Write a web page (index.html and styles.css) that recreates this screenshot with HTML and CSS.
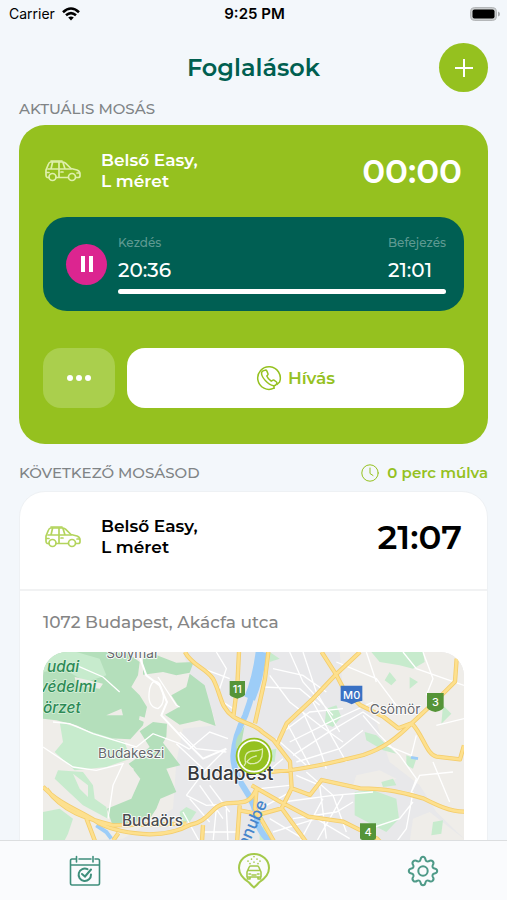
FILE: index.html
```html
<!DOCTYPE html>
<html lang="hu">
  <head>
    <meta charset="UTF-8" />
    <meta name="viewport" content="width=device-width, initial-scale=1" />
    <title>Foglalások</title>
    <link rel="stylesheet" href="styles.css" />
  </head>
  <body>
    <svg class="defs" width="0" height="0" aria-hidden="true">
      <symbol id="car" viewBox="0 0 36 22">
        <g fill="none" stroke="currentColor" stroke-width="1.7" stroke-linejoin="round" stroke-linecap="round">
          <path d="M4 17.500H2.200Q1 17 1 15V10L3.500 4Q4.200 2 6 2H17Q19 2 20.500 3.200L26 8.500L32 10Q35 11 35 14V16Q35 17.500 33 17.500H31M11 17.500H23" />
          <path d="M3 9H26M7.500 2.500L6 9M14 2.500V17M18 2.500L20 9M1.500 12.500H4M32 13H34.500M16 12H18M6 1H17" />
          <circle cx="7.500" cy="17" r="3.500" />
          <circle cx="27" cy="17" r="3.500" />
        </g>
      </symbol>
    </svg>

    <div class="status-bar">
      <div class="carrier">
        Carrier
        <svg width="18" height="14" viewBox="0 0 18 14" aria-hidden="true">
          <g fill="none" stroke="#000" stroke-width="2.600">
            <path d="M1 5.200Q9 -2.200 17 5.200" />
            <path d="M4 8.300Q9 4 14 8.300" />
          </g>
          <path d="M6.200 10.600Q9 8.300 11.800 10.600L9 13.600Z" />
        </svg>
      </div>
      <div class="clock">9:25 PM</div>
      <div class="battery">
        <svg width="30" height="14" viewBox="0 0 30 14" aria-hidden="true">
          <rect x="0.500" y="0.500" width="26" height="13" rx="4" fill="#c9cccd" stroke="#b4b7b9" />
          <rect x="2.500" y="2.500" width="22" height="9" rx="2" />
          <path d="M28 4.500Q30 5 30 7T28 9.500Z" fill="#a9acae" />
        </svg>
      </div>
    </div>

    <main class="content">
      <header class="page-header">
        <h1>Foglalások</h1>
        <button class="add-button" type="button" aria-label="Új foglalás">
          <svg width="20" height="20" viewBox="0 0 20 20" aria-hidden="true">
            <path d="M10 1V19M1 10H19" stroke="#fff" stroke-width="2" />
          </svg>
        </button>
      </header>

      <div class="section-title">
        <h2>AKTUÁLIS MOSÁS</h2>
      </div>

      <section class="card current">
        <div class="card-header">
          <svg class="car" aria-hidden="true"><use href="#car" /></svg>
          <h3>Belső Easy,<br />L méret</h3>
          <div class="time">00:00</div>
        </div>

        <div class="progress-panel">
          <button class="pause" type="button" aria-label="Szünet">
            <span></span>
            <span></span>
          </button>
          <div class="progress-info">
            <div class="times">
              <div>
                <div class="label">Kezdés</div>
                <div class="value">20:36</div>
              </div>
              <div>
                <div class="label">Befejezés</div>
                <div class="value">21:01</div>
              </div>
            </div>
            <progress value="100" max="100" aria-label="Mosás állapota"></progress>
          </div>
        </div>

        <div class="actions">
          <button class="more" type="button" aria-label="Több">
            <span></span>
            <span></span>
            <span></span>
          </button>
          <button class="call" type="button">
            <svg width="26" height="26" viewBox="0 0 26 26" aria-hidden="true">
              <g fill="none" stroke="currentColor" stroke-width="1.500" stroke-linecap="round" stroke-linejoin="round">
                <path d="M18 23.200A11.300 11.300 0 1 1 23.600 17L21 19.500" />
                <path d="M7.300 5.700L9.500 5.100Q10.300 5 10.800 5.900L12 8.700Q12.300 9.500 11.500 10.200L10.800 11Q12 14 15.200 16.200L16.500 15.300Q17.300 14.800 18 15.200L20.500 17Q21.200 17.600 20.800 18.500Q19.700 21 17.500 20.700Q13.500 20 9.300 15.500Q5 10.800 5.600 7.500Q6 6 7.300 5.700Z" />
                <path d="M18 23.200V21" />
              </g>
            </svg>
            Hívás
          </button>
        </div>
      </section>

      <div class="section-title upcoming">
        <h2>KÖVETKEZŐ MOSÁSOD</h2>
        <div class="countdown">
          <svg width="18" height="18" viewBox="0 0 18 18" aria-hidden="true">
            <g fill="none" stroke="currentColor" stroke-linecap="round">
              <circle cx="9" cy="9" r="8.200" />
              <path d="M9 4V9.500L12 11.500" />
            </g>
          </svg>
          0 perc múlva
        </div>
      </div>

      <section class="card next">
        <div class="card-header">
          <svg class="car" aria-hidden="true"><use href="#car" /></svg>
          <h3>Belső Easy,<br />L méret</h3>
          <div class="time">21:07</div>
        </div>
        <div class="location">
          <p>1072 Budapest, Akácfa utca</p>
          <svg class="map" viewBox="0 0 1263 750" role="img" aria-label="Budapest térkép">
            <rect width="1263" height="750" fill="#e8e8ea" />

            <!-- countryside -->
            <g fill="#efede9">
              <path d="M0 0H420L450 90L500 150L520 220L420 230L400 330L390 470L240 560L0 570Z" />
              <path d="M890 0H1263V560L1180 480L1130 400L1040 330L1000 210L960 140L900 110Z" />
              <path d="M940 370L1010 355L1060 380L1010 410L930 400ZM1110 500L1160 480L1263 560V640H1090Z" />
            </g>

            <!-- forests -->
            <g fill="#b4dfbb">
              <path d="M0 0H250L290 30L285 70L265 105L290 130L312 165L300 220L262 262L180 258L100 220L40 205L0 200Z" />
              <path d="M300 18L330 5L400 32L452 30L440 62L400 70L360 60L300 68Z" />
              <path d="M385 130L430 105L440 65L485 100L505 170L518 222L470 205L410 218L366 188L408 165Z" />
              <path d="M290 238L330 210L372 215L370 255L360 272L412 340L370 350L400 420L352 440L340 470L320 500L210 525L192 470L265 440L292 380L257 335L286 315L320 285Z" />
            </g>
            <g fill="#c7ebcd">
              <path d="M0 60L60 50L130 90L190 70L170 20L100 0H0Z" />
              <path d="M50 210L130 235L245 270L262 320L190 345L95 355L35 300L60 270Z" />
              <path d="M45 355L120 360L150 400L155 440L190 465L195 500L120 460L35 380Z" />
              <path d="M0 480L50 470L90 500L75 545L60 575L0 570Z" />
              <path d="M410 480L430 465L460 480L440 510H415Z" />
              <path d="M680 0L710 20L680 30ZM850 170L880 160L895 195L870 225L845 215ZM680 295L700 290L695 330L675 325Z" />
              <path d="M965 240L1000 250L1060 305L1020 295L970 265Z" />
              <path d="M935 420L990 415L1060 440L1068 500L1030 540L935 490Z" />
              <path d="M985 0H1140L1145 30L1110 50L1070 40L1010 30ZM1040 60L1060 85L1045 100L1025 85ZM1100 75L1125 90L1100 110ZM1200 160L1225 185L1195 215ZM1090 310L1120 320L1110 350L1090 340ZM1170 510L1200 505L1195 545L1165 550Z" />
              <path d="M1015 390L1050 380L1060 400L1020 405ZM650 520L680 535V570H650Z" />
            </g>
            <g fill="#efede9">
              <path d="M190 190L235 170L240 190ZM95 75L180 95L170 110L100 100ZM290 192L315 200L310 213L288 203Z" />
              <path d="M165 375L245 330L272 350L260 430L205 462L170 430ZM90 365L135 400V435L110 410Z" />
              <path d="M335 85L395 72L405 90L365 140L330 120Z" />
            </g>

            <!-- Danube -->
            <g fill="none" stroke="#9dcdf8">
              <path d="M652 0Q640 100 607 190Q575 250 571 310Q570 360 605 410Q640 460 645 520Q665 560 685 570V750" stroke-width="18" />
              <path d="M655 0Q645 80 620 140" stroke-width="34" />
              <path d="M160 520L190 540L205 560" stroke-width="12" />
              <path d="M1104 316L1125 320" stroke-width="8" />
            </g>
            <path d="M594 240L605 220L596 270L578 292Q575 260 594 240Z" fill="#b4dfbb" />

            <!-- side streets -->
            <g fill="none" stroke="#fff" stroke-width="4">
              <path d="M292 20L310 70L350 100L372 150L355 190L420 260L480 320L550 290" stroke-width="6" />
              <path d="M320 110Q310 165 345 170Q375 150 350 95Q330 75 320 110" />
              <path d="M345 75L400 160L410 165M100 40L180 75L230 120M30 210L80 215L150 245L280 285L330 245L410 275L440 292" />
              <path d="M0 285L90 345L160 355L240 335L210 400L195 500" />
              <path d="M410 240L460 290L550 300M440 290L500 240L555 260M400 275L480 350M550 290L490 350L430 430" />
              <path d="M430 430L490 460L570 455M440 440L500 510M470 400L540 500M500 400L560 480M420 480L470 570M520 470L510 570M550 470L555 570M480 540H590" />
              <path d="M520 0L550 50L530 110M480 50L560 80M540 150L570 170" />
              <path d="M680 70L740 150L830 220L900 270M690 50L780 70L850 120M660 105L770 110L830 160M740 0L780 90L870 190M780 0L820 120L890 240" />
              <path d="M720 240L800 180L900 170M740 270L870 205L990 150M750 310L850 245L960 180L1010 215M760 330L890 290L960 235" />
              <path d="M780 180L830 290L850 350M810 150L870 260L910 330M730 210L800 340M700 260L790 340" />
              <path d="M960 190L1010 250L1070 310L1120 380L1105 420M1030 280L1105 310L1120 250M1100 430L1130 370L1230 360M1170 330L1220 450" />
              <path d="M760 370L830 400L850 560M790 360L870 430L910 540M720 450L870 430L990 420M750 500L880 480L930 450M840 440L770 570M900 430L820 570M950 540L1070 500L1110 450M1110 420L1090 530L1060 570" />
              <path d="M670 460L760 410M650 410L740 400M680 500L780 560M690 540L820 500L920 560M650 380L720 320" />
              <path d="M880 30L1000 80L1060 160M1140 0L1170 80L1150 130M1080 0L1120 50L1263 100M1180 220L1263 200M1000 90L970 0" />
            </g>

            <!-- main roads, casing and fill -->
            <g fill="none" stroke="#f4cd6c" stroke-width="13" stroke-linejoin="round">
              <path id="roads" d="M426 0C446 40 485 45 510 80C536 130 530 165 571 194C601 214 641 219 659 241L691 264L741 329L746 409L716 469L640 490
                M588 0L583 100L571 194M676 0L666 80L636 214
                M951 0L879 67L811 139L731 214L701 279M836 0L879 67L901 109L951 159L1021 194L1066 229L1106 214
                M1241 20L1236 89L1181 144L1106 214C1061 259 1021 289 961 309C881 329 781 354 680 360
                M1106 214C1141 249 1151 309 1181 314L1251 322L1263 280
                M746 409L801 429L836 384L951 409C1051 409 1101 429 1141 439C1181 459 1221 479 1263 479
                M626 400L711 449L796 494L901 509L1001 559L1060 620M641 409L636 469L691 565L740 750M716 469L786 565L850 640
                M0 404C50 459 120 479 170 515C220 540 270 545 320 547C390 545 420 530 440 519C500 509 505 459 550 454C590 449 620 462 641 409
                M10 410C60 480 130 500 210 520L430 515M130 499L155 565L150 640M226 544L211 565M480 519L475 600M590 460L580 600M590 475L640 485" />
            </g>
            <use href="#roads" fill="none" class="road-fill" />

            <!-- road signs -->
            <g class="sign">
              <path d="M560 87H606V127Q606 134 583 140Q560 134 560 127Z" fill="#559438" />
              <text x="583" y="123">11</text>
              <path d="M893 101H958V146Q940 148 926 157Q912 148 893 146Z" fill="#3971c4" />
              <text x="926" y="140">M0</text>
              <path d="M1152 123H1202V166Q1202 174 1177 180Q1152 174 1152 166Z" fill="#559438" />
              <text x="1177" y="161">3</text>
              <path d="M951 514H999V558Q999 564 975 570Q951 564 951 558Z" fill="#559438" />
              <text x="975" y="552">4</text>
            </g>

            <!-- places -->
            <g class="place">
              <text x="190" y="18">Solymár</text>
              <text x="165" y="317">Budakeszi</text>
              <text x="980" y="187">Csömör</text>
              <text x="237" y="523" class="town">Budaörs</text>
              <text x="433" y="384" class="city">Budapest</text>
            </g>
            <g class="park">
              <text x="12" y="59">udai</text>
              <text x="-12" y="121">védelmi</text>
              <text x="0" y="183">örzet</text>
            </g>
            <text class="river" transform="translate(598 622) rotate(-66)">Danube</text>

            <!-- car wash pin -->
            <circle cx="633" cy="312" r="55" fill="#95c11f" />
            <circle cx="633" cy="312" r="47" fill="none" stroke="#fff" stroke-width="5" />
            <path d="M608 333Q600 300 629 297Q646 297 658 291Q662 336 625 335Q617 336 612 329Q622 315 640 312M608 333L604 340" fill="none" stroke="#dcecb2" stroke-width="4" stroke-linecap="round" />
          </svg>
        </div>
      </section>
    </main>

    <nav class="tab-bar">
      <a href="#bookings" aria-label="Foglalások">
        <svg width="32" height="32" viewBox="0 0 32 32" aria-hidden="true">
          <g fill="none" stroke="#3f8f7c" stroke-width="1.600" stroke-linecap="round">
            <path d="M7 4H3Q1.500 4 1.500 6V28Q1.500 30 3 30H29Q30.500 30 30.500 28V6Q30.500 4 29 4H26M10 4H22M1.500 10H30.500M7.500 1.500V7M24 1.500V7" />
            <path d="M18.500 14.200A6.200 6.200 0 1 0 22 19.500" stroke-width="2" />
            <path d="M13 19L16 21.500L22 14.500" stroke-width="2" />
          </g>
        </svg>
      </a>
      <a href="#map" aria-label="Mosók">
        <svg width="32" height="36" viewBox="0 0 32 36" aria-hidden="true">
          <g fill="none" stroke="#a4c94b" stroke-width="1.600" stroke-linecap="round" stroke-linejoin="round">
            <path d="M16 34.500Q14 33 11 29.500Q1 23 1 15A15 14 0 0 1 31 15Q31 23 21 29.500Q18 33 16 34.500Z" stroke-width="2" />
            <path d="M9 19L11.200 14Q11.500 13 12.500 13H19.500Q20.500 13 20.800 14L23 19V24H9ZM10 17.500H22M11 21H12.500M19.500 21H21M14 22H18M9.500 24V26H12V24M20 24V26H22.500V24" />
            <path d="M10 8V8.200M13.500 6V6.200M16 9V9.200M19 6V6.200M22 8V8.200M16 3.500V3.700M12 10.500V10.700M20 10.500V10.700" />
          </g>
        </svg>
      </a>
      <a href="#settings" aria-label="Beállítások">
        <svg width="32" height="32" viewBox="0 0 32 32" aria-hidden="true">
          <g fill="none" stroke="#4e9a88" stroke-width="2" stroke-linejoin="round">
            <path d="M13.500 4.500Q14 1.800 16 1.800T18.500 4.500Q19 7 21.500 6.400Q24 4.500 25.700 6.300T25.600 10.500Q25 13 27.500 13.500Q30.200 14 30.200 16T27.500 18.500Q25 19 25.600 21.500Q27.500 24 25.700 25.700T21.500 25.600Q19 25 18.500 27.500Q18 30.200 16 30.200T13.500 27.500Q13 25 10.500 25.600Q8 27.500 6.300 25.700T6.400 21.500Q7 19 4.500 18.500Q1.800 18 1.800 16T4.500 13.500Q7 13 6.400 10.500Q4.500 8 6.300 6.300T10.500 6.400Q13 7 13.500 4.500Z" />
            <circle cx="16" cy="16" r="4.700" />
          </g>
        </svg>
      </a>
    </nav>
  </body>
</html>
```
FILE: styles.css
```css
* {
    box-sizing: border-box;
}

body {
    margin: 0;
    height: 100vh;
    display: flex;
    flex-direction: column;
    font-family: Montserrat, Inter, sans-serif;
    color: #000;
    background-color: #f3f7fb;
}

h1, h2, h3, p {
    margin: 0;
}

button {
    border: 0;
    padding: 0;
    font-family: inherit;
    display: flex;
    align-items: center;
    justify-content: center;
    cursor: pointer;
}

svg {
    display: block;
}

.defs {
    position: absolute;
}

/* Status bar */
.status-bar {
    display: grid;
    grid-template-columns: 1fr auto 1fr;
    align-items: center;
    flex-shrink: 0;
    height: 27px;
    padding: 0 7px 0 9px;
    font-family: Inter, sans-serif;
    font-size: 14px;
}

.carrier {
    display: flex;
    align-items: center;
    gap: 7px;
}

.clock {
    font-size: 15px;
    font-weight: 600;
}

.battery {
    justify-self: end;
}

.content {
    flex: 1;
    min-height: 0;
    overflow-y: auto;
    scrollbar-width: none;
    padding: 16px 19px 24px;
}

.page-header {
    display: grid;
    grid-template-columns: 1fr auto 1fr;
    align-items: center;
}

.page-header h1 {
    grid-column: 2;
    font-size: 24px;
    line-height: 32px;
    font-weight: 600;
    color: #005f50;
}

.add-button {
    justify-self: end;
    width: 49px;
    height: 49px;
    border-radius: 50%;
    background-color: #95c11f;
}

.section-title {
    display: flex;
    align-items: center;
    justify-content: space-between;
    margin: 7px 0 6px;
    line-height: 20px;
}

.section-title h2 {
    font-size: 15px;
    font-weight: 500;
    color: #808486;
}

.section-title.upcoming {
    margin: 19px 0 8px;
}

.countdown {
    display: flex;
    align-items: center;
    gap: 8px;
    font-size: 15px;
    font-weight: 600;
    color: #95c11f;
}

/* Cards */
.card {
    border-radius: 26px;
}

.card-header {
    display: flex;
    align-items: center;
}

.card-header h3 {
    flex: 1;
    font-size: 17px;
    line-height: 21px;
    font-weight: 600;
}

.car {
    width: 36px;
    height: 22px;
    margin: 0 20px 0 2px;
}

.time {
    font-size: 34px;
    line-height: 42px;
    font-weight: 600;
    margin-right: 2px;
}

.current {
    padding: 25px 24px 36px;
    color: #fff;
    background-color: #95c11f;
}

.current .car {
    color: #dff0ac;
}

.next {
    border: 1px solid #eef1f4;
    background-color: #fff;
}

.next .card-header {
    padding: 24px 23px 31px;
    border-bottom: 2px solid #f1f2f3;
}

.next .car {
    color: #b3d45c;
}

.progress-panel {
    display: flex;
    align-items: center;
    gap: 11px;
    margin-top: 25px;
    height: 94px;
    padding: 0 18px 0 23px;
    border-radius: 24px;
    background-color: #005f53;
}

.pause {
    flex-shrink: 0;
    gap: 4px;
    width: 41px;
    height: 41px;
    border-radius: 50%;
    background-color: #dc2590;
}

.pause span {
    width: 4px;
    height: 16px;
    background-color: #fff;
}

.progress-info {
    flex: 1;
}

.times {
    display: flex;
    justify-content: space-between;
    margin-bottom: 7px;
}

.label {
    font-size: 12px;
    line-height: 16px;
    font-weight: 500;
    margin-bottom: 7px;
    color: #5f9a92;
}

.value {
    font-size: 20px;
    line-height: 24px;
    font-weight: 500;
}

progress {
    display: block;
    width: 100%;
    height: 5px;
    border: 0;
    border-radius: 3px;
    overflow: hidden;
    appearance: none;
    background-color: #33807a;
}

progress::-webkit-progress-bar {
    background-color: #33807a;
}

progress::-webkit-progress-value {
    background-color: #fff;
}

.actions {
    display: flex;
    gap: 12px;
    margin-top: 37px;
}

.actions button {
    height: 60px;
    border-radius: 18px;
}

.more {
    gap: 3px;
    width: 72px;
    background-color: #aacf4d;
}

.more span {
    width: 6px;
    height: 6px;
    border-radius: 50%;
    background-color: #fff;
}

.call {
    flex: 1;
    gap: 6px;
    font-size: 17px;
    font-weight: 600;
    color: #95c11f;
    background-color: #fff;
}

/* Location and map */
.location {
    padding: 20px 23px 24px;
}

.location p {
    font-size: 17px;
    line-height: 22px;
    font-weight: 500;
    margin-bottom: 19px;
    color: #858585;
}

.map {
    width: 100%;
    border-radius: 24px;
    font-family: Inter, sans-serif;
}

.road-fill {
    stroke: #fde08e;
    stroke-width: 8px;
}

.sign {
    font-size: 33px;
    font-weight: 500;
    fill: #fff;
    text-anchor: middle;
}

.place {
    font-size: 41px;
    fill: #66686c;
    stroke: #fff;
    stroke-width: 5px;
    paint-order: stroke;
}

.place .town {
    font-size: 46px;
    font-weight: 500;
    fill: #4a4c50;
}

.place .city {
    font-size: 57px;
    font-weight: 500;
    fill: #36383c;
}

.park {
    font-size: 46px;
    font-style: italic;
    font-weight: 500;
    fill: #2c8a55;
    stroke: #d9f0dc;
    stroke-width: 4px;
    paint-order: stroke;
}

.river {
    font-size: 50px;
    font-weight: 500;
    fill: #4585cc;
}

/* Bottom navigation */
.tab-bar {
    display: grid;
    grid-template-columns: repeat(3, 1fr);
    align-items: center;
    justify-items: center;
    flex-shrink: 0;
    height: 60px;
    border-top: 1px solid #dcdee0;
    background-color: #fafbfd;
}
```
